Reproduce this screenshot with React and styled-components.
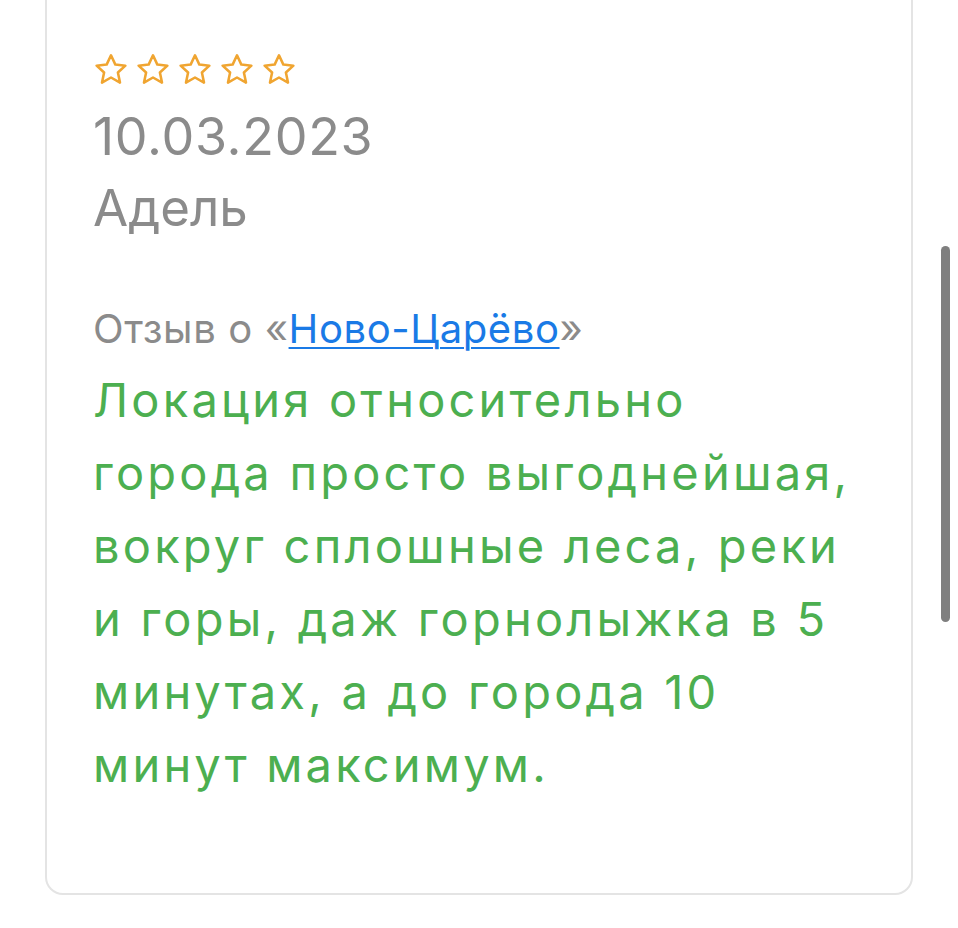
import React from "react";
import styled, { createGlobalStyle } from "styled-components";

const GlobalStyle = createGlobalStyle`
    html, body {
        margin: 0;
        padding: 0;
        background: #ffffff;
    }
    body {
        font-family: Inter, "Noto Sans", sans-serif;
    }
`

const Page = styled.div`
    position: relative;
    width: 958px;
    height: 928px;
    overflow: hidden;
    padding-left: 45px;
    box-sizing: border-box;
`

const Card = styled.div`
    width: 868px;
    margin-top: -30px;
    height: 925px;
    box-sizing: border-box;
    border: 2px solid #e4e4e4;
    border-radius: 18px;
    padding: 80px 40px 0 46px;
`

const Stars = styled.div`
    display: flex;
    gap: 6px;
`

const Star = () => (
    <svg width="36" height="33" viewBox="0 0 24 22" fill="none">
        <path
            d="M12 2.2l2.9 6.2 6.7.7-5 4.6 1.4 6.7L12 17l-6 3.4 1.4-6.7-5-4.6 6.7-.7z"
            stroke="#f0a531"
            strokeWidth="1.7"
            strokeLinejoin="round"
        />
    </svg>
)

const Muted = styled.div`
    color: #8b8b8b;
    font-size: ${p => p.size}px;
    line-height: ${p => p.lh}px;
    margin-top: ${p => p.mt || 0}px;
    letter-spacing: ${p => p.ls || 0}px;
`

const Link = styled.a`
    color: #1a7ae6;
    text-decoration: underline;
    text-decoration-thickness: 2px;
    text-underline-offset: 4px;
`

const Body = styled.p`
    margin: 9px 0 0;
    color: #4caf50;
    font-size: 47px;
    line-height: 73px;
    max-width: 758px;
    letter-spacing: 3.2px;
`

const Scrollbar = styled.div`
    position: absolute;
    left: 941px;
    top: 246px;
    width: 9px;
    height: 376px;
    border-radius: 5px;
    background: #7f7f7f;
`

const reviewText = "Локация относительно города просто выгоднейшая, вокруг сплошные леса, реки и горы, даж горнолыжка в 5 минутах, а до города 10 минут максимум."

const App = () => {
    return (
        <Page>
            <GlobalStyle />
            <Card>
                <Stars>
                    {[0, 1, 2, 3, 4].map(i => <Star key={i} />)}
                </Stars>
                <Muted size={52} lh={70} mt={17} ls={0.7}>10.03.2023</Muted>
                <Muted size={51} lh={72}>Адель</Muted>
                <Muted size={40} lh={50} mt={60} ls={0.6}>
                    Отзыв о «<Link href="#">Ново-Царёво</Link>»
                </Muted>
                <Body>{reviewText}</Body>
            </Card>
            <Scrollbar />
        </Page>
    )
}

export default App;
